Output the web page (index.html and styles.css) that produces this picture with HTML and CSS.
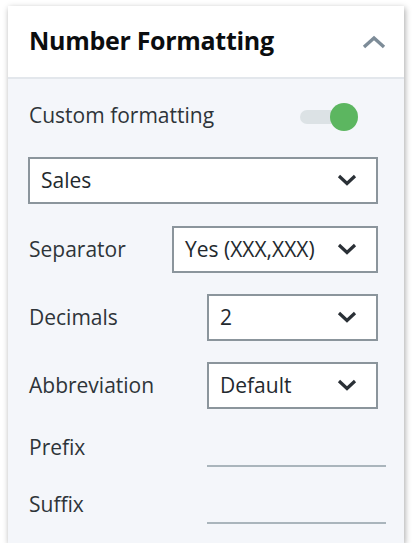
FILE: index.html
```html
<!DOCTYPE html>
<html>
<head>
<meta charset="utf-8">
<link rel="stylesheet" href="styles.css">
</head>
<body>
<div class="panel">
  <div class="panel-header">
    <h2 class="title">Number Formatting</h2>
    <svg class="collapse" width="24" height="14" viewBox="0 0 24 14"><path d="M2 12 L12 3 L22 12" fill="none" stroke="#7d8c98" stroke-width="3.4"/></svg>
  </div>
  <div class="panel-body">
    <div class="row toggle-row">
      <span class="label">Custom formatting</span>
      <div class="toggle"><div class="track"></div><div class="knob"></div></div>
    </div>
    <div class="select full">
      <span class="value">Sales</span>
      <svg class="chev" width="20" height="12" viewBox="0 0 20 12"><path d="M2 2 L10 9.5 L18 2" fill="none" stroke="#2a3036" stroke-width="3.2"/></svg>
    </div>
    <div class="row">
      <span class="label">Separator</span>
      <div class="select sep">
        <span class="value">Yes (XXX,XXX)</span>
        <svg class="chev" width="20" height="12" viewBox="0 0 20 12"><path d="M2 2 L10 9.5 L18 2" fill="none" stroke="#2a3036" stroke-width="3.2"/></svg>
      </div>
    </div>
    <div class="row">
      <span class="label">Decimals</span>
      <div class="select narrow">
        <span class="value">2</span>
        <svg class="chev" width="20" height="12" viewBox="0 0 20 12"><path d="M2 2 L10 9.5 L18 2" fill="none" stroke="#2a3036" stroke-width="3.2"/></svg>
      </div>
    </div>
    <div class="row">
      <span class="label">Abbreviation</span>
      <div class="select narrow">
        <span class="value">Default</span>
        <svg class="chev" width="20" height="12" viewBox="0 0 20 12"><path d="M2 2 L10 9.5 L18 2" fill="none" stroke="#2a3036" stroke-width="3.2"/></svg>
      </div>
    </div>
    <div class="row input-row first-input">
      <span class="label">Prefix</span>
      <div class="text-input"></div>
    </div>
    <div class="row input-row">
      <span class="label">Suffix</span>
      <div class="text-input"></div>
    </div>
  </div>
</div>
</body>
</html>
```
FILE: styles.css
```css
html, body {
  margin: 0;
  padding: 0;
  background: #ffffff;
}
body {
  font-family: "Open Sans", "Noto Sans", sans-serif;
  color: #2e3439;
}
.panel {
  margin: 6px 0 0 8px;
  width: 396px;
  background: #f4f6fa;
  box-shadow: 1px 2px 6px rgba(0, 0, 0, 0.35);
}
.panel-header {
  height: 71px;
  background: #ffffff;
  border-bottom: 2px solid #e3e7ec;
  display: flex;
  align-items: center;
  justify-content: space-between;
  padding: 0 18px 0 21px;
  box-sizing: content-box;
}
.title {
  margin: 0 0 3px 0;
  font-size: 25px;
  font-weight: 700;
  color: #0b0d0f;
  letter-spacing: -0.3px;
  line-height: 1;
}
.collapse {
  display: block;
  margin-top: 0;
}
.panel-body {
  padding: 24px 26px 19px 20px;
}
.row {
  display: flex;
  align-items: center;
  justify-content: space-between;
}
.label {
  font-size: 21px;
  line-height: 1;
  padding-left: 1px;
  color: #2e3439;
}
.toggle-row {
  height: 28px;
  margin-bottom: 26px;
  padding-right: 20px;
}
.toggle-row .label {
  margin-bottom: 3px;
}
.toggle {
  position: relative;
  width: 58px;
  height: 28px;
}
.track {
  position: absolute;
  left: 0;
  top: 7px;
  width: 50px;
  height: 14px;
  border-radius: 7px;
  background: #dce2e5;
}
.knob {
  position: absolute;
  right: 0;
  top: 0;
  width: 28px;
  height: 28px;
  border-radius: 50%;
  background: #5cb660;
}
.select {
  box-sizing: border-box;
  height: 47px;
  border: 2px solid #8b959c;
  background: #ffffff;
  display: flex;
  align-items: center;
  justify-content: space-between;
  padding: 0 19px 0 11px;
  margin-bottom: 21px;
  font-size: 21px;
  line-height: 1;
}
.select .value {
  color: #23292e;
}
.chev {
  display: block;
  margin-top: -1px;
}
.full {
  width: 350px;
  margin-bottom: 22px;
}
.row .select {
  margin-bottom: 0;
}
.row + .row {
  margin-top: 21px;
}
.sep {
  width: 206px;
}
.narrow {
  width: 171px;
}
.input-row {
  height: 40px;
  margin-right: -8px;
}
.row.first-input {
  margin-top: 18px;
}
.row.input-row + .row.input-row {
  margin-top: 17px;
}
.text-input {
  box-sizing: border-box;
  width: 179px;
  height: 40px;
  border-bottom: 2px solid #aab5bc;
}
```
